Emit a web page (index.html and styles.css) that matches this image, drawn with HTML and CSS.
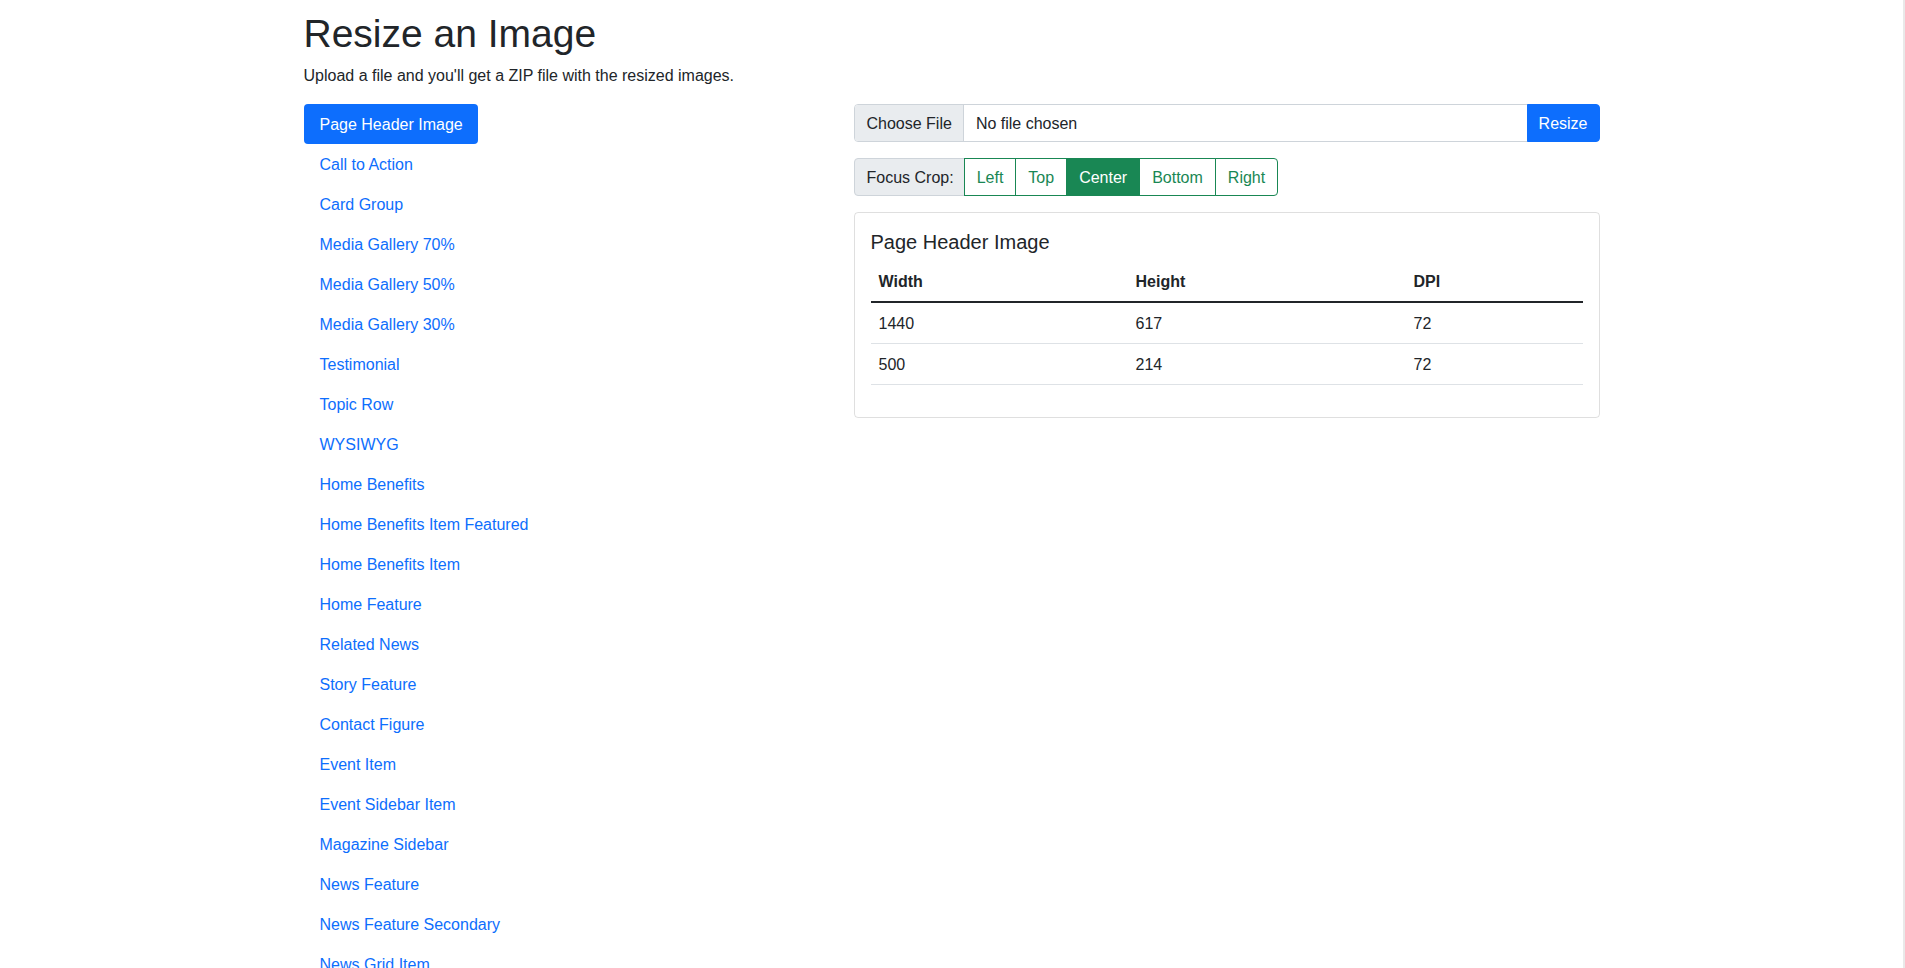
FILE: index.html
```html
<!DOCTYPE html>
<html lang="en">
<head>
<meta charset="utf-8">
<title>Resize an Image</title>
<link rel="stylesheet" href="styles.css">
</head>
<body>
<div class="container">
  <h1 class="title">Resize an Image</h1>
  <p class="intro">Upload a file and you'll get a ZIP file with the resized images.</p>
  <div class="row">
    <nav class="side">
      <a class="pill active" href="#">Page Header Image</a>
      <a class="pill" href="#">Call to Action</a>
      <a class="pill" href="#">Card Group</a>
      <a class="pill" href="#">Media Gallery 70%</a>
      <a class="pill" href="#">Media Gallery 50%</a>
      <a class="pill" href="#">Media Gallery 30%</a>
      <a class="pill" href="#">Testimonial</a>
      <a class="pill" href="#">Topic Row</a>
      <a class="pill" href="#">WYSIWYG</a>
      <a class="pill" href="#">Home Benefits</a>
      <a class="pill" href="#">Home Benefits Item Featured</a>
      <a class="pill" href="#">Home Benefits Item</a>
      <a class="pill" href="#">Home Feature</a>
      <a class="pill" href="#">Related News</a>
      <a class="pill" href="#">Story Feature</a>
      <a class="pill" href="#">Contact Figure</a>
      <a class="pill" href="#">Event Item</a>
      <a class="pill" href="#">Event Sidebar Item</a>
      <a class="pill" href="#">Magazine Sidebar</a>
      <a class="pill" href="#">News Feature</a>
      <a class="pill" href="#">News Feature Secondary</a>
      <a class="pill" href="#">News Grid Item</a>
    </nav>
    <main class="main">
      <div class="file-group">
        <div class="file-field">
          <span class="file-btn">Choose File</span>
          <span class="file-name">No file chosen</span>
        </div>
        <button class="resize-btn" type="button">Resize</button>
      </div>
      <div class="crop-group">
        <span class="crop-label">Focus Crop:</span>
        <button class="crop-btn" type="button">Left</button>
        <button class="crop-btn" type="button">Top</button>
        <button class="crop-btn active" type="button">Center</button>
        <button class="crop-btn" type="button">Bottom</button>
        <button class="crop-btn last" type="button">Right</button>
      </div>
      <section class="card">
        <h5 class="card-title">Page Header Image</h5>
        <table class="sizes">
          <thead>
            <tr><th class="c1">Width</th><th class="c2">Height</th><th>DPI</th></tr>
          </thead>
          <tbody>
            <tr><td>1440</td><td>617</td><td>72</td></tr>
            <tr><td>500</td><td>214</td><td>72</td></tr>
          </tbody>
        </table>
      </section>
    </main>
  </div>
</div>
</body>
</html>
```
FILE: styles.css
```css
html {
  border-right: 2px solid #e9e9e9;
}
* {
  box-sizing: border-box;
}
body {
  margin: 0;
  font-family: "Liberation Sans", Arial, sans-serif;
  font-size: 16px;
  line-height: 1.5;
  color: #212529;
  background: #fff;
}
.container {
  width: 1320px;
  margin: 0 auto;
  padding: 8px 12px 0;
}
.title {
  margin: 0 0 6px;
  padding-top: 2px;
  font-size: 39px;
  font-weight: 500;
  line-height: 48px;
}
.intro {
  margin: 0 0 16px;
}
.row {
  display: flex;
  margin: 0 -12px;
}
.side {
  width: 550px;
  padding: 0 12px;
  display: flex;
  flex-direction: column;
  align-items: flex-start;
}
.pill {
  display: block;
  padding: 9px 15px 7px 16px;
  color: #0d6efd;
  text-decoration: none;
  border-radius: 4px;
}
.pill.active {
  background: #0d6efd;
  color: #fff;
}
.main {
  width: 770px;
  padding: 0 12px;
}
.file-group {
  display: flex;
  margin-bottom: 16px;
}
.file-field {
  flex: 1;
  display: flex;
  border: 1px solid #ced4da;
  border-radius: 4px 0 0 4px;
  overflow: hidden;
}
.file-btn {
  padding: 7px 11px 5px 12px;
  background: #e9ecef;
  border-right: 1px solid #ced4da;
}
.file-name {
  padding: 7px 12px 5px;
}
.resize-btn {
  font: inherit;
  line-height: 1.5;
  padding: 7px 11px 5px;
  margin-left: -1px;
  color: #fff;
  background: #0d6efd;
  border: 1px solid #0d6efd;
  border-radius: 0 4px 4px 0;
}
.crop-group {
  display: flex;
  margin-bottom: 16px;
}
.crop-label {
  padding: 7px 10px 5px 12px;
  background: #e9ecef;
  border: 1px solid #ced4da;
  border-radius: 4px 0 0 4px;
}
.crop-btn {
  font: inherit;
  line-height: 1.5;
  padding: 7px 12px 5px;
  margin-left: -1px;
  color: #198754;
  background: #fff;
  border: 1px solid #198754;
  border-radius: 0;
}
.crop-btn.active {
  color: #fff;
  background: #198754;
}
.crop-btn.last {
  border-radius: 0 4px 4px 0;
}
.card {
  border: 1px solid rgba(0, 0, 0, 0.125);
  border-radius: 4px;
  padding: 16px;
}
.card-title {
  margin: 0 0 7px;
  padding-top: 1px;
  font-size: 20px;
  font-weight: 500;
  line-height: 1.2;
}
.sizes {
  width: 100%;
  border-collapse: collapse;
  margin-bottom: 16px;
}
.sizes th,
.sizes td {
  padding: 9px 8px 7px;
  text-align: left;
  border-bottom: 1px solid #dee2e6;
}
.sizes th {
  font-weight: 700;
}
.sizes thead th {
  border-bottom: 2px solid #212529;
}
.c1 {
  width: 257px;
}
.c2 {
  width: 278px;
}
```
